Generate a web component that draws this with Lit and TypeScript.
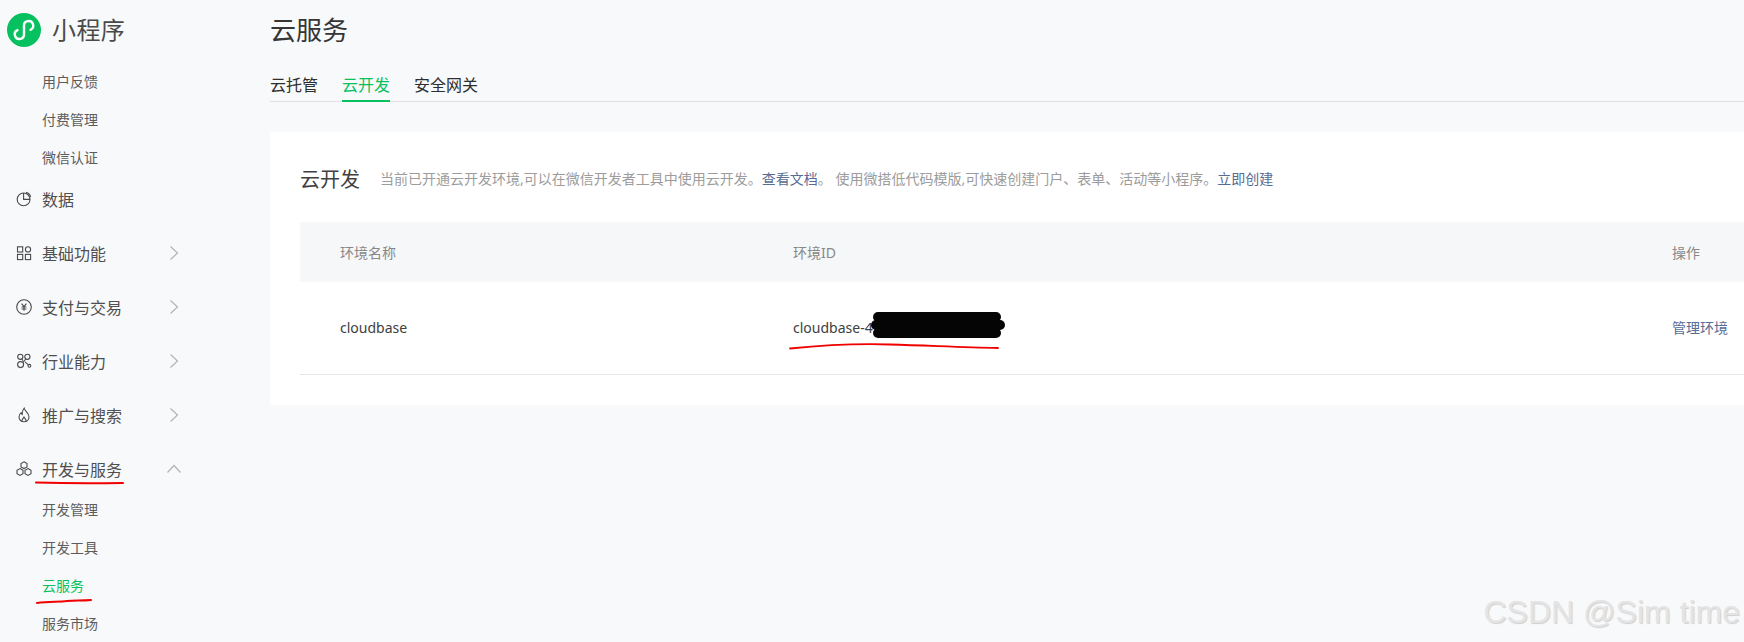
import { LitElement, html, css, svg, TemplateResult } from "lit";
import { customElement } from "lit/decorators.js";

// Sidebar icons, all drawn on a 16x16 box
const icons: Record<string, TemplateResult> = {
  data: svg`<circle cx="7.6" cy="8.4" r="6.4"/><path d="M7.6 2v6.4H14"/><path d="M10 1.4a6 6 0 0 1 4.6 4.6"/>`,
  base: svg`<rect x="1.500" y="1.800" width="5.200" height="5.200"/><rect x="1.500" y="9.400" width="5.200" height="5.200"/><rect x="9.400" y="9.400" width="5.200" height="5.200"/><circle cx="12" cy="4.400" r="2.600"/>`,
  pay: svg`<circle cx="8" cy="8" r="7.300"/><path d="M5.600 4.600 8 7.600l2.400-3M8 7.600v4.200M5.600 8h4.800M5.600 10h4.800"/>`,
  industry: svg`<circle cx="4.300" cy="3.800" r="2.600"/><circle cx="11.400" cy="3.800" r="2.600"/><circle cx="4.600" cy="11.600" r="3"/><circle cx="13.400" cy="12.800" r="1.400"/><path d="M5.800 6 7 7.600M9.800 6 7 9.400M9 8.800l3.400 3"/>`,
  promo: svg`<path d="M8.200 1.200c.2 2.600 4.800 4.600 4.800 8.800 0 2.900-2.300 4.800-5 4.800S3 12.900 3 10c0-1.900 1-3.300 2.200-4.300.2 1 .4 1.400 1 1.800 0-2.400.2-4.600 2-6.300z"/><path d="M5.800 14.400c0-2 1.400-2.800 2.200-4.400 1 1.400 2.200 2.400 2.200 4.400"/>`,
  dev: svg`<path d="m8 .800 3 1.700v3.400L8 7.600 5 5.900V2.500z"/><path d="m4 7.600 3 1.700v3.400L4 14.400l-3-1.700V9.300z"/><path d="m12 7.600 3 1.700v3.400l-3 1.700-3-1.700V9.300z"/>`,
};

interface NavItem {
  type: "main" | "sub";
  label: string;
  icon?: string;
  arrow?: "right" | "up";
  active?: boolean;
}

const nav: NavItem[] = [
  { type: "sub", label: "用户反馈" },
  { type: "sub", label: "付费管理" },
  { type: "sub", label: "微信认证" },
  { type: "main", label: "数据", icon: "data" },
  { type: "main", label: "基础功能", icon: "base", arrow: "right" },
  { type: "main", label: "支付与交易", icon: "pay", arrow: "right" },
  { type: "main", label: "行业能力", icon: "industry", arrow: "right" },
  { type: "main", label: "推广与搜索", icon: "promo", arrow: "right" },
  { type: "main", label: "开发与服务", icon: "dev", arrow: "up" },
  { type: "sub", label: "开发管理" },
  { type: "sub", label: "开发工具" },
  { type: "sub", label: "云服务", active: true },
  { type: "sub", label: "服务市场" },
];

@customElement("app-root")
export class AppRoot extends LitElement {
  static override styles = css`
    :host {
      display: block;
      position: relative;
      height: 642px;
      overflow: hidden;
      background: #f8f9fb;
      color: #353535;
      font-family: "Noto Sans", "Noto Sans CJK SC", sans-serif;
    }
    .layout {
      display: flex;
      height: 642px;
    }

    /* sidebar */
    .side {
      flex: 0 0 270px;
      box-sizing: border-box;
      padding-top: 13px;
    }
    .brand {
      display: flex;
      align-items: center;
      gap: 11px;
      height: 34px;
      padding-left: 7px;
      margin-bottom: 16px;
      font-size: 24px;
      letter-spacing: 0.4px;
      line-height: 34px;
      color: #4a4a4a;
    }
    .brand svg {
      display: block;
      width: 34px;
      height: 34px;
    }
    .sub {
      height: 38px;
      line-height: 38px;
      padding-left: 42px;
      font-size: 14px;
      color: #5c5c5c;
    }
    .sub.active {
      color: #07c160;
    }
    .main {
      display: flex;
      align-items: center;
      height: 44px;
      margin-top: 10px;
      padding-left: 16px;
      font-size: 16px;
      color: #4f4f4f;
    }
    .sub + .main {
      margin-top: 0;
    }
    .icon {
      flex: none;
      width: 16px;
      height: 16px;
      margin-right: 10px;
      fill: none;
      stroke: #4a4a4a;
      stroke-width: 1.1;
    }
    .label {
      width: 127px;
    }
    .arrow {
      flex: none;
      fill: none;
      stroke: #b4b4b4;
      stroke-width: 1.2;
    }
    .arrow.up {
      margin-left: -3px;
    }

    /* content */
    .content {
      flex: 1;
      min-width: 0;
      padding-top: 12px;
    }
    h1 {
      margin: 0;
      font-size: 26px;
      font-weight: 400;
      line-height: 36px;
      color: #353535;
    }
    .tabs {
      display: flex;
      gap: 24px;
      height: 48px;
      margin-top: 6px;
      box-sizing: border-box;
      border-bottom: 1px solid #dfe1e5;
      font-size: 16px;
      line-height: 26px;
      padding-top: 18px;
    }
    .tab {
      height: 30px;
      box-sizing: border-box;
      color: #2e2e2e;
    }
    .tab.active {
      color: #07c160;
      border-bottom: 2px solid #07c160;
    }
    .card {
      margin-top: 30px;
      height: 273px;
      box-sizing: border-box;
      padding: 28px 0 0 30px;
      background: #fff;
    }
    .card-head {
      display: flex;
      align-items: center;
      gap: 20px;
      height: 36px;
    }
    h2 {
      margin: 0;
      font-size: 20px;
      font-weight: 400;
      color: #404040;
    }
    .desc {
      font-size: 14px;
      color: #9c9c9c;
      white-space: nowrap;
    }
    a {
      color: #576b95;
      text-decoration: none;
    }
    .table {
      margin-top: 26px;
      font-size: 14px;
    }
    .row {
      display: grid;
      grid-template-columns: 453px 879px auto;
      padding-left: 40px;
      align-items: center;
    }
    .row.head {
      height: 60px;
      background: #f6f7f9;
      color: #888;
    }
    .row.body {
      height: 93px;
      box-sizing: border-box;
      padding-bottom: 2px;
      border-bottom: 1px solid #e6e7eb;
      color: #404040;
    }

    /* hand drawn marks and the watermark lie over the page */
    .marks {
      position: absolute;
      left: 0;
      top: 0;
      pointer-events: none;
    }
    .watermark {
      position: absolute;
      right: 4px;
      top: 591px;
      font-family: "Liberation Sans", sans-serif;
      font-size: 32px;
      line-height: 42px;
      color: #e4e4e4;
      text-shadow: 1px 1px 1px #cfcfcf;
      white-space: nowrap;
    }
  `;

  private renderNavItem(item: NavItem) {
    if (item.type === "sub") {
      return html`<div class="sub ${item.active ? "active" : ""}">${item.label}</div>`;
    }
    return html`
      <div class="main">
        <svg class="icon" viewBox="0 0 16 16">${icons[item.icon!]}</svg>
        <span class="label">${item.label}</span>
        ${item.arrow === "right"
          ? html`<svg class="arrow" width="10" height="16" viewBox="0 0 10 16"><path d="m1.500 1.500 7 6.500-7 6.500"/></svg>`
          : ""}
        ${item.arrow === "up"
          ? html`<svg class="arrow up" width="16" height="10" viewBox="0 0 16 10"><path d="m1.500 8.500 6.500-7 6.500 7"/></svg>`
          : ""}
      </div>
    `;
  }

  override render(): TemplateResult {
    return html`
      <div class="layout">
        <aside class="side">
          <div class="brand">
            <svg viewBox="0 0 34 34">
              <circle cx="17" cy="17" r="17" fill="#07c160" />
              <path d="M10.500 17.200A4.600 4.600 0 1 0 17 21V13a4.600 4.600 0 1 1 6.500 3.800" fill="none" stroke="#fff" stroke-width="2.400" stroke-linecap="round" />
            </svg>
            小程序
          </div>
          ${nav.map((item) => this.renderNavItem(item))}
        </aside>
        <main class="content">
          <h1>云服务</h1>
          <div class="tabs">
            <div class="tab">云托管</div>
            <div class="tab active">云开发</div>
            <div class="tab">安全网关</div>
          </div>
          <section class="card">
            <div class="card-head">
              <h2>云开发</h2>
              <div class="desc">
                当前已开通云开发环境,可以在微信开发者工具中使用云开发。<a>查看文档</a>。 使用微搭低代码模版,可快速创建门户、表单、活动等小程序。<a>立即创建</a>
              </div>
            </div>
            <div class="table">
              <div class="row head">
                <div>环境名称</div>
                <div>环境ID</div>
                <div>操作</div>
              </div>
              <div class="row body">
                <div>cloudbase</div>
                <div>cloudbase-4</div>
                <div><a>管理环境</a></div>
              </div>
            </div>
          </section>
        </main>
      </div>
      <svg class="marks" width="1744" height="642" viewBox="0 0 1744 642" fill="none" stroke="#f00000" stroke-linecap="round">
        <g stroke="#050505" stroke-width="10">
          <path d="M878 317h118" />
          <path d="M876 325h124" />
          <path d="M878 333h118" />
        </g>
        <path d="M790 348.500c40-4 70-5 100-4 40 1 70 3 108 3.500" stroke-width="1.800" />
        <path d="M36 482.500c30 1 60 1 87 .5" stroke-width="2" />
        <path d="M37 603c12-1.500 22-1 30-2 8-1 14 0 24-1" stroke-width="2" />
      </svg>
      <div class="watermark">CSDN @Sim time</div>
    `;
  }
}
